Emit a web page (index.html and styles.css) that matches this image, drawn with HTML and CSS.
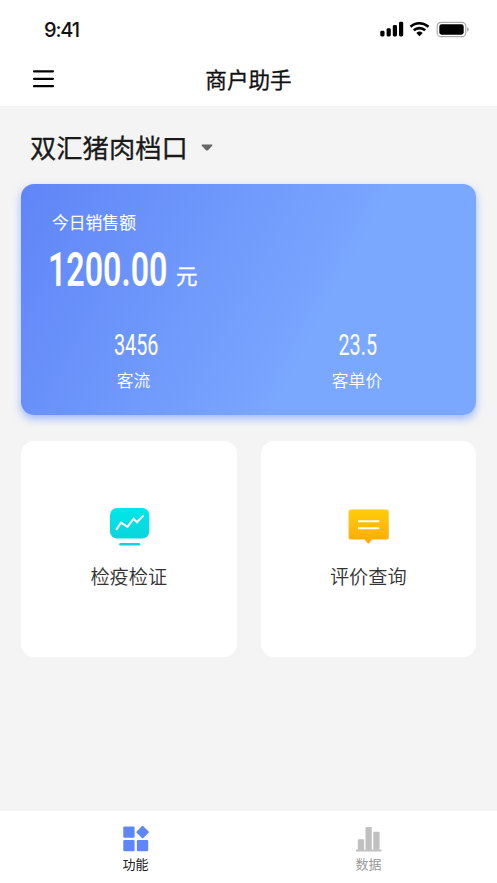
FILE: index.html
```html
<!DOCTYPE html>
<html lang="zh-CN">
<head>
<meta charset="utf-8">
<meta name="viewport" content="width=device-width, initial-scale=1">
<title>商户助手</title>
<link rel="stylesheet" href="styles.css">
</head>
<body>
<header class="top">
  <div class="status">
    <span class="time">9:41</span>
    <svg class="signals" width="90" height="18" viewBox="0 0 90 18">
      <rect x="0.3" y="10.8" width="4.2" height="5.600" rx="1.4"/>
      <rect x="6.6" y="8.2" width="4.2" height="8.200" rx="1.4"/>
      <rect x="12.8" y="5" width="4.2" height="11.400" rx="1.4"/>
      <rect x="19" y="1.8" width="4.2" height="14.600" rx="1.4"/>
      <g class="wifi">
        <path d="M30.5 6.8C35.5 2 43 2 48.500 6.800"/>
        <path d="M33.800 10.300C37 7.400 42 7.400 45.200 10.300"/>
      </g>
      <path d="M36.300 12.900Q39.500 10.300 42.700 12.900L39.500 16.200Z"/>
      <rect class="shell" x="57.200" y="2.300" width="28.600" height="14.400" rx="4"/>
      <rect x="59.300" y="4.300" width="24.400" height="10.400" rx="2.400"/>
      <path class="cap" d="M87 7.200Q88.800 8 88.800 9.500T87 11.800Z"/>
    </svg>
  </div>
  <div class="nav">
    <svg class="menu" width="22" height="18" viewBox="0 0 22 18"><path d="M1 1.300H20M1 8.800H20M1 16.200H20"/></svg>
    <h1 class="title">商户助手</h1>
  </div>
</header>
<main class="content">
  <div class="shop">
    <span>双汇猪肉档口</span>
    <svg width="12" height="8" viewBox="0 0 12 8"><path d="M1.200.600H10.800Q11.900.700 11.200 1.700L7 6.200Q6 7 5 6.200L.800 1.700Q.100.700 1.200.600Z"/></svg>
  </div>
  <section class="sales">
    <p class="label">今日销售额</p>
    <p class="amount"><span class="amount-box"><span class="figure">1200.00</span></span><span class="unit">元</span></p>
    <div class="stats">
      <div class="stat"><span class="stat-value">3456</span><span class="stat-name visitors">客流</span></div>
      <div class="stat"><span class="stat-value">23.5</span><span class="stat-name">客单价</span></div>
    </div>
  </section>
  <div class="tiles">
    <a class="tile">
      <svg width="42" height="40" viewBox="0 0 42 40">
        <defs><linearGradient id="cyan" x2="0" y2="1"><stop stop-color="#00e8e8"/><stop offset="1" stop-color="#0cd4dd"/></linearGradient></defs>
        <rect x="2" y="1" width="39.300" height="30.600" rx="7" fill="url(#cyan)"/>
        <path d="M8.600 22.300L13 15.600L19.500 19.800L25.500 11.700L29 15.200L34.800 9" fill="none" stroke="#fff" stroke-width="2" stroke-linecap="round"/>
        <rect x="11.200" y="36" width="21" height="2.400" rx="1.200" fill="#10d1dc"/>
      </svg>
      <span>检疫检证</span>
    </a>
    <a class="tile">
      <svg width="42" height="40" viewBox="0 0 42 40">
        <defs><linearGradient id="gold" x2="0" y2="1"><stop stop-color="#ffcd0a"/><stop offset="1" stop-color="#ffa90b"/></linearGradient></defs>
        <path transform="translate(.6 .4)" d="M4 2H38.500Q41.200 2 41.200 4.700V29.500Q41.200 32.200 38.500 32.200H24.600L21.500 35.900Q20.800 36.700 20.100 35.900L17 32.200H4Q1 32.200 1 29.500V4.700Q1 2 4 2Z" fill="url(#gold)"/>
        <path d="M11 14.200H32.300M11 21.200H32.300" stroke="#fff" stroke-width="2"/>
      </svg>
      <span>评价查询</span>
    </a>
  </div>
</main>
<nav class="tabs">
  <a class="tab active">
    <svg width="28" height="28" viewBox="0 0 28 28">
      <rect x="1.300" y="1.500" width="11.300" height="11.300" rx="1.200"/>
      <rect x="1.300" y="15" width="11.300" height="11.300" rx="1.200"/>
      <rect x="14.900" y="15" width="11.300" height="11.300" rx="1.200"/>
      <rect x="15.900" y="2.400" width="9.400" height="9.400" rx="1" transform="rotate(45 20.600 7.100)"/>
    </svg>
    <span>功能</span>
  </a>
  <a class="tab">
    <svg width="28" height="28" viewBox="0 0 28 28">
      <rect x="2.800" y="14.300" width="6.300" height="11" rx="1"/>
      <rect x="10.500" y="2" width="6.300" height="23" rx="1"/>
      <rect x="18.300" y="6.800" width="6.300" height="18" rx="1"/>
      <rect x=".9" y="24.600" width="25.700" height="2" rx=".5"/>
    </svg>
    <span>数据</span>
  </a>
</nav>
</body>
</html>
```
FILE: styles.css
```css
* { box-sizing: border-box; margin: 0; padding: 0; }
body {
  width: 497px;
  height: 883px;
  overflow: hidden;
  display: flex;
  flex-direction: column;
  background: #f4f4f4;
  color: #1a1a1a;
  font-family: "Noto Sans CJK SC", sans-serif;
}
svg { display: block; flex: none; }
.top { height: 106px; background: #fff; }
.status {
  height: 56px;
  padding: 20px 27px 0 44px;
  display: flex;
  justify-content: space-between;
}
.time { font: 500 20px/20px Inter, sans-serif; letter-spacing: -1.2px; color: #111; }
.signals { fill: #000; }
.wifi { fill: none; stroke: #000; stroke-width: 2.600; }
.signals .shell { fill: none; stroke: #aaa; stroke-width: 1.200; }
.signals .cap { fill: #aaa; }
.nav {
  height: 45px;
  padding: 0 32px 0 33px;
  display: grid;
  grid-template-columns: 22px 1fr 23px;
  align-items: center;
}
.menu { fill: none; stroke: #000; stroke-width: 2.200; stroke-linecap: round; }
.title {
  font-size: 21.600px;
  line-height: 32px;
  font-weight: 400;
  -webkit-text-stroke: .3px #111;
  text-align: center;
  color: #111;
}
.content { flex: 1; padding: 20px 21px 0; }
.shop {
  height: 58px;
  padding-left: 9px;
  display: flex;
  gap: 13px;
  font-size: 26.300px;
  line-height: 41px;
  -webkit-text-stroke: .3px #1a1a1a;
}
.shop svg { margin-top: 18px; fill: #666; }
.sales {
  height: 231px;
  padding: 25px 0 0;
  border-radius: 13px;
  color: #fff;
  background: linear-gradient(118deg, #6085f7 0%, #7aa7ff 65%, #7aa7ff 100%);
  box-shadow: 0 4px 8px rgba(122, 160, 255, .7);
}
.label { padding-left: 31px; font-size: 16.800px; line-height: 26px; -webkit-text-stroke: .1px #fff; }
.amount {
  height: 70px;
  padding-left: 27px;
  display: flex;
}
.amount-box { width: 119px; height: 70px; }
.figure {
  display: inline-block;
  font: 600 48px/70px Roboto, sans-serif;
  transform: scaleX(.67);
  transform-origin: 0 50%;
}
.unit { margin-left: 9px; padding-top: 24px; font-size: 21.500px; line-height: 32px; -webkit-text-stroke: .3px #fff; }
.stats { display: grid; grid-template-columns: 221px 221px; padding: 22px 0 0 5px; }
.stat { display: flex; flex-direction: column; align-items: center; }
.stat-value { font: 400 29.500px/37px Roboto, sans-serif; transform: scaleX(.67); }
.stat-name { margin-right: 1px; font-size: 16.800px; line-height: 32px; font-weight: 350; }
.visitors { margin-right: 6px; }
.tiles { display: grid; grid-template-columns: 1fr 1fr; gap: 24px; margin-top: 26px; }
.tile {
  height: 216px;
  padding-top: 66px;
  display: flex;
  flex-direction: column;
  align-items: center;
  gap: 14px;
  border-radius: 13px;
  background: #fff;
  color: #333;
  font-size: 19.200px;
  font-weight: 350;
  line-height: 30px;
}
.tabs {
  height: 72px;
  padding: 0 12px 0 19px;
  display: grid;
  grid-template-columns: 233px 233px;
  background: #fff;
}
.tab {
  padding-top: 14px;
  display: flex;
  flex-direction: column;
  align-items: center;
  gap: 1px;
  font-size: 13px;
  line-height: 20px;
  color: #999;
  fill: #c0c0c0;
}
.active { color: #222; fill: #6085f7; }
```
